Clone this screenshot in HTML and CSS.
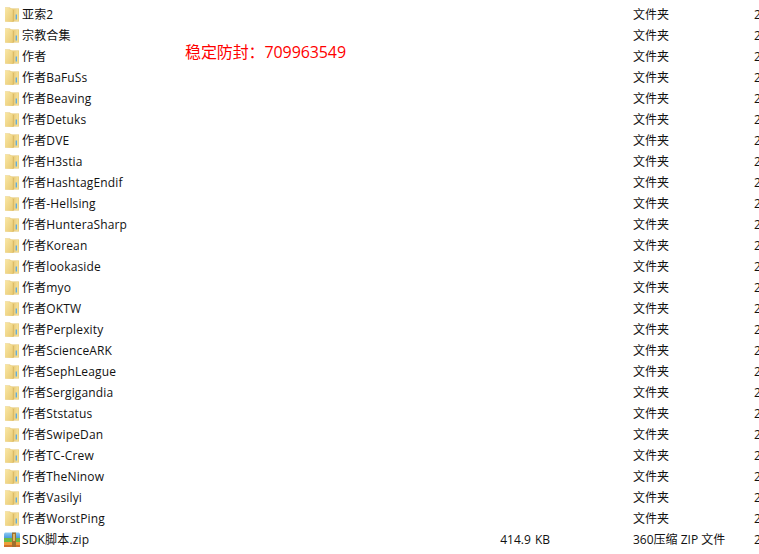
FILE: index.html
```html
<!DOCTYPE html>
<html lang="zh">
<head>
<meta charset="utf-8">
<title>文件列表</title>
<link rel="stylesheet" href="styles.css">
</head>
<body>
<svg class="defs" width="0" height="0" aria-hidden="true">
  <defs>
    <linearGradient id="fb" x1="0" x2="1" y1="0" y2="0"><stop offset="0" stop-color="#e8c976"/><stop offset="1" stop-color="#f5e3a0"/></linearGradient>
    <linearGradient id="ff" x1="0" x2="1" y1="0" y2="1"><stop offset="0" stop-color="#f9e7a6"/><stop offset="1" stop-color="#e9ca72"/></linearGradient>
    <linearGradient id="zb" x1="0" x2="0" y1="0" y2="1"><stop offset="0" stop-color="#8ccaf2"/><stop offset="1" stop-color="#4a9ae0"/></linearGradient>
    <symbol id="folder" viewBox="0 0 16 15">
      <path d="M1 .5H6L7 1.5H15V14.5H1Z" fill="#e2c268"/>
      <path d="M9 2H14.5V14H9Z" fill="url(#fb)"/>
      <path d="M1 .5 8 1.5 9 3V15L2 14.5 1 14Z" fill="url(#ff)"/>
      <path d="M9.3 3V14.8" stroke="#cfac58" stroke-width=".7"/>
      <path d="M12.3 7.5V12.5" stroke="#5aa9e0" stroke-width="1.3"/>
    </symbol>
    <symbol id="zip" viewBox="0 0 16 15">
      <path d="M0 1.5 1 .5H15L16 1.5V6H0Z" fill="url(#zb)"/>
      <rect y="6" width="16" height="4" fill="#6cba45"/>
      <rect y="10" width="16" height="3" fill="#ee9e38"/>
      <rect y="13" width="16" height="2" fill="#d0702e"/>
      <rect x="8" y=".5" width="4" height="14.5" fill="#a0702e"/>
      <rect x="9" y="2" width="2" height="7" fill="#d8b868"/>
    </symbol>
  </defs>
</svg>
<main class="list">
  <div class="row"><svg class="icon"><use href="#folder"/></svg><span class="name">亚索2</span><span class="size"></span><span class="type">文件夹</span><span class="date">2</span></div>
  <div class="row"><svg class="icon"><use href="#folder"/></svg><span class="name">宗教合集</span><span class="size"></span><span class="type">文件夹</span><span class="date">2</span></div>
  <div class="row"><svg class="icon"><use href="#folder"/></svg><span class="name">作者</span><span class="size"></span><span class="type">文件夹</span><span class="date">2</span></div>
  <div class="row"><svg class="icon"><use href="#folder"/></svg><span class="name">作者BaFuSs</span><span class="size"></span><span class="type">文件夹</span><span class="date">2</span></div>
  <div class="row"><svg class="icon"><use href="#folder"/></svg><span class="name">作者Beaving</span><span class="size"></span><span class="type">文件夹</span><span class="date">2</span></div>
  <div class="row"><svg class="icon"><use href="#folder"/></svg><span class="name">作者Detuks</span><span class="size"></span><span class="type">文件夹</span><span class="date">2</span></div>
  <div class="row"><svg class="icon"><use href="#folder"/></svg><span class="name">作者DVE</span><span class="size"></span><span class="type">文件夹</span><span class="date">2</span></div>
  <div class="row"><svg class="icon"><use href="#folder"/></svg><span class="name">作者H3stia</span><span class="size"></span><span class="type">文件夹</span><span class="date">2</span></div>
  <div class="row"><svg class="icon"><use href="#folder"/></svg><span class="name">作者HashtagEndif</span><span class="size"></span><span class="type">文件夹</span><span class="date">2</span></div>
  <div class="row"><svg class="icon"><use href="#folder"/></svg><span class="name">作者-Hellsing</span><span class="size"></span><span class="type">文件夹</span><span class="date">2</span></div>
  <div class="row"><svg class="icon"><use href="#folder"/></svg><span class="name">作者HunteraSharp</span><span class="size"></span><span class="type">文件夹</span><span class="date">2</span></div>
  <div class="row"><svg class="icon"><use href="#folder"/></svg><span class="name">作者Korean</span><span class="size"></span><span class="type">文件夹</span><span class="date">2</span></div>
  <div class="row"><svg class="icon"><use href="#folder"/></svg><span class="name">作者lookaside</span><span class="size"></span><span class="type">文件夹</span><span class="date">2</span></div>
  <div class="row"><svg class="icon"><use href="#folder"/></svg><span class="name">作者myo</span><span class="size"></span><span class="type">文件夹</span><span class="date">2</span></div>
  <div class="row"><svg class="icon"><use href="#folder"/></svg><span class="name">作者OKTW</span><span class="size"></span><span class="type">文件夹</span><span class="date">2</span></div>
  <div class="row"><svg class="icon"><use href="#folder"/></svg><span class="name">作者Perplexity</span><span class="size"></span><span class="type">文件夹</span><span class="date">2</span></div>
  <div class="row"><svg class="icon"><use href="#folder"/></svg><span class="name">作者ScienceARK</span><span class="size"></span><span class="type">文件夹</span><span class="date">2</span></div>
  <div class="row"><svg class="icon"><use href="#folder"/></svg><span class="name">作者SephLeague</span><span class="size"></span><span class="type">文件夹</span><span class="date">2</span></div>
  <div class="row"><svg class="icon"><use href="#folder"/></svg><span class="name">作者Sergigandia</span><span class="size"></span><span class="type">文件夹</span><span class="date">2</span></div>
  <div class="row"><svg class="icon"><use href="#folder"/></svg><span class="name">作者Ststatus</span><span class="size"></span><span class="type">文件夹</span><span class="date">2</span></div>
  <div class="row"><svg class="icon"><use href="#folder"/></svg><span class="name">作者SwipeDan</span><span class="size"></span><span class="type">文件夹</span><span class="date">2</span></div>
  <div class="row"><svg class="icon"><use href="#folder"/></svg><span class="name">作者TC-Crew</span><span class="size"></span><span class="type">文件夹</span><span class="date">2</span></div>
  <div class="row"><svg class="icon"><use href="#folder"/></svg><span class="name">作者TheNinow</span><span class="size"></span><span class="type">文件夹</span><span class="date">2</span></div>
  <div class="row"><svg class="icon"><use href="#folder"/></svg><span class="name">作者Vasilyi</span><span class="size"></span><span class="type">文件夹</span><span class="date">2</span></div>
  <div class="row"><svg class="icon"><use href="#folder"/></svg><span class="name">作者WorstPing</span><span class="size"></span><span class="type">文件夹</span><span class="date">2</span></div>
  <div class="row"><svg class="icon"><use href="#zip"/></svg><span class="name">SDK脚本.zip</span><span class="size">414.9 KB</span><span class="type">360压缩 ZIP 文件</span><span class="date">2</span></div>
</main>
<div class="note">稳定防封：709963549</div>
</body>
</html>
```
FILE: styles.css
```css
html, body {
  margin: 0;
  height: 100%;
  overflow: hidden;
  background: #fff;
}
body {
  position: relative;
  font-family: "Open Sans", "Noto Sans CJK SC", sans-serif;
  font-size: 12px;
  color: #111;
}
.defs {
  display: block;
  height: 0;
}
.list {
  padding-top: 4px;
}
.row {
  display: grid;
  grid-template-columns: 16px 466px 65px 204px 20px;
  height: 21px;
  line-height: 21px;
  padding-left: 3px;
  white-space: nowrap;
  width: 780px;
}
.icon {
  width: 16px;
  height: 15px;
  margin-top: 3px;
  margin-left: 1px;
}
.name {
  padding-left: 3px;
  letter-spacing: 0.15px;
}
.size {
  text-align: right;
  word-spacing: 1px;
}
.type {
  padding-left: 83px;
}
.note {
  position: absolute;
  left: 185px;
  top: 40px;
  font-size: 16px;
  line-height: 24px;
  letter-spacing: -0.1px;
  color: #f00;
}
```
